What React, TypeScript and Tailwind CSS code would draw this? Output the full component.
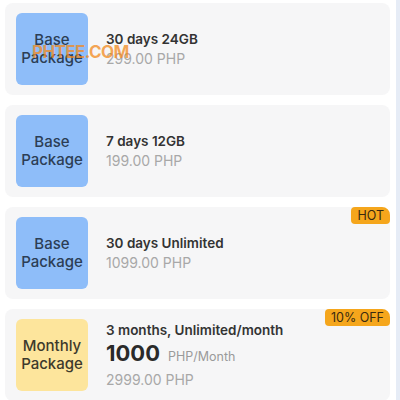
type Pkg = {
  kind: "base" | "monthly";
  title: string;
  price: string;
  perMonth?: string;
  badge?: string;
};

const packages: Pkg[] = [
  { kind: "base", title: "30 days 24GB", price: "299.00 PHP" },
  { kind: "base", title: "7 days 12GB", price: "199.00 PHP" },
  { kind: "base", title: "30 days Unlimited", price: "1099.00 PHP", badge: "HOT" },
  {
    kind: "monthly",
    title: "3 months, Unlimited/month",
    price: "2999.00 PHP",
    perMonth: "1000",
    badge: "10% OFF",
  },
];

function PackageCard({ pkg }: { pkg: Pkg }) {
  const monthly = pkg.kind === "monthly";
  return (
    <div className="relative flex items-center h-[92px] shrink-0 rounded-lg bg-[#f6f6f7] pl-[11px]">
      <div
        className={
          monthly
            ? "flex items-center justify-center w-[72px] h-[72px] rounded-md bg-[#fde59c] text-[#3d3a2c] text-[15px] leading-[18px] font-medium text-center"
            : "flex items-center justify-center w-[72px] h-[72px] rounded-md bg-[#8ebdf9] text-[#2c3e55] text-[15px] leading-[18px] font-medium text-center"
        }
      >
        {monthly ? "Monthly" : "Base"}
        <br />
        Package
      </div>
      <div className="ml-[18px] flex flex-col">
        <div className="text-[13.5px] leading-[20px] font-semibold text-[#333]">{pkg.title}</div>
        {pkg.perMonth && (
          <div className="flex items-baseline gap-[8px] leading-[26px]">
            <span className="text-[22px] font-bold text-[#2a2a2a]">{pkg.perMonth}</span>
            <span className="text-[12.5px] text-[#9a9a9a]">PHP/Month</span>
          </div>
        )}
        <div className="text-[14px] leading-[20px] text-[#a8a8a8]">{pkg.price}</div>
      </div>
      {pkg.badge && (
        <div className="absolute top-0 right-0 h-[17px] px-[6px] rounded-[4px] rounded-tr-lg bg-[#f5a61c] text-[#3a2a10] text-[12.5px] leading-[17px]">
          {pkg.badge}
        </div>
      )}
    </div>
  );
}

export default function App() {
  return (
    <div
      className="relative w-[400px] h-[400px] overflow-hidden bg-white flex"
      style={{ fontFamily: "Inter, 'Noto Sans', sans-serif" }}
    >
      <div className="flex flex-col gap-[10px] pt-[3px] pl-[5px] w-[390px]">
        {packages.map((p, i) => (
          <PackageCard key={i} pkg={p} />
        ))}
      </div>
      <div className="ml-auto w-[4px] bg-[#e6ecf6]" />
      <div className="absolute left-[32px] top-[42px] text-[17px] leading-[20px] font-bold tracking-[-0.6px] text-[#f28a1e]/75">
        PHTEE.COM
      </div>
    </div>
  );
}
